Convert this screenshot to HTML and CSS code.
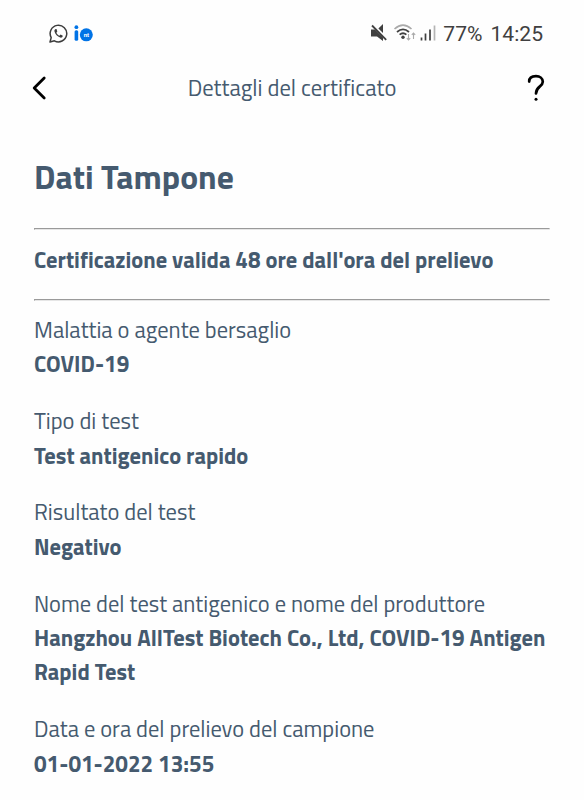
FILE: index.html
```
<!DOCTYPE html>
<html lang="it">

<head>
    <meta charset="UTF-8">
    <meta name="viewport" content="width=device-width, initial-scale=1.0">
    <title>Dettagli del certificato</title>
    <link rel="stylesheet" href="styles.css">
</head>

<body>
    <div class="status-bar">
        <div class="status-apps">
            <svg class="whatsapp" width="19" height="19" viewBox="0 0 19 19">
                <path d="M1 18 L2.2 13.6 A8.3 8.3 0 1 1 5.4 16.8 Z" fill="none" stroke="#3c3c3c" stroke-width="1.5" stroke-linejoin="round" />
                <path d="M6.7 5 C5.6 5.4 5.2 6.3 5.5 7.6 C6.2 10.4 8.4 12.8 11.2 13.6 C12.5 13.9 13.7 13.3 13.8 11.7 L11.6 10.5 L10.4 11.7 C9 11.1 8 10.1 7.4 8.8 L8.3 7.6 L7.5 5.1 Z" fill="#3c3c3c" />
            </svg>
            <svg class="io" width="19" height="17" viewBox="0 0 19 17">
                <circle cx="2.4" cy="2.2" r="1.9" fill="#0073e6" />
                <rect x=".6" y="5.2" width="3.6" height="10.6" rx="1.5" fill="#0073e6" />
                <circle cx="12.3" cy="9.8" r="6.5" fill="#0073e6" />
                <text class="io-text" x="12.4" y="12">nt</text>
            </svg>
        </div>
        <div class="status-info">
            <svg width="66" height="18" viewBox="0 0 66 18">
                <!-- muted -->
                <path d="M0 5.5 H4 L12 13.5 V17 L6 12.5 H0 Z M7.4 4.4 L12 0 V9 Z" fill="#404040" />
                <path d="M1 1.5 L15.2 15.8" stroke="#404040" stroke-width="1.8" />
                <!-- wifi -->
                <path d="M23.5 5 Q32 -2.8 40.5 5" fill="none" stroke="#aaa" stroke-width="1.6" />
                <path d="M26 8 Q32 2.8 38 8 M28.6 10.6 Q32 7.8 35.4 10.6" fill="none" stroke="#404040" stroke-width="1.8" />
                <circle cx="32" cy="13.3" r="1.7" fill="#404040" />
                <path d="M37.5 10 V16 M35.8 14.2 L37.5 16 L39.2 14.2 M42.5 15 V9 M40.8 10.8 L42.5 9 L44.2 10.8" fill="none" stroke="#aaa" stroke-width="1.1" />
                <!-- signal -->
                <path d="M50.5 16.5 V13.5 M54.5 16.5 V9.5 M59 16.5 V5.5" stroke="#404040" stroke-width="1.7" />
                <path d="M63.5 16.5 V1.5" stroke="#b5b5b5" stroke-width="1.7" />
            </svg>
            <span class="battery">77%</span>
            <span class="clock">14:25</span>
        </div>
    </div>

    <header>
        <svg width="16" height="26" viewBox="0 0 16 26">
            <path d="M12.2 3 L2.2 13 L12.2 23" fill="none" stroke="#000" stroke-width="2.8" stroke-linecap="round" stroke-linejoin="round" />
        </svg>
        <div class="header-title">Dettagli del certificato</div>
        <svg width="18" height="28" viewBox="0 0 18 28">
            <path d="M2.2 7.6 C2.2 4 5 2.2 9 2.2 C13 2.2 15.8 4.4 15.8 7.8 C15.8 12.6 9 12.4 9 19.5" fill="none" stroke="#000" stroke-width="2.7" stroke-linecap="round" />
            <circle cx="9" cy="25.3" r="1.5" fill="#000" />
        </svg>
    </header>

    <main>
        <h1>Dati Tampone</h1>
        <hr>
        <div class="validity">Certificazione valida 48 ore dall'ora del prelievo</div>
        <hr>
        <dl>
            <dt>Malattia o agente bersaglio</dt>
            <dd>COVID-19</dd>
            <dt>Tipo di test</dt>
            <dd>Test antigenico rapido</dd>
            <dt>Risultato del test</dt>
            <dd>Negativo</dd>
            <dt>Nome del test antigenico e nome del produttore</dt>
            <dd>Hangzhou AllTest Biotech Co., Ltd, COVID-19 Antigen Rapid Test</dd>
            <dt>Data e ora del prelievo del campione</dt>
            <dd>01-01-2022 13:55</dd>
        </dl>
    </main>
</body>

</html>
```
FILE: styles.css
```
body {
    margin: 0;
    height: 800px;
    overflow: hidden;
    background-color: #fefefe;
    color: #455a6f;
    font-family: 'Titillium Web', Roboto, sans-serif;
}

.status-bar {
    display: flex;
    justify-content: space-between;
    align-items: center;
    height: 66px;
    padding: 0 41px 0 49px;
    color: #404040;
    font-family: Roboto, sans-serif;
    font-size: 21.1px;
}

.status-apps,
.status-info {
    display: flex;
    align-items: center;
}

.io {
    margin-left: 6px;
}

.io-text {
    fill: #fff;
    font-size: 6px;
    font-weight: 700;
    text-anchor: middle;
}

.battery {
    margin: 0 8px 0 6px;
}

header {
    display: flex;
    justify-content: space-between;
    align-items: center;
    height: 44px;
    padding: 0 39px 0 32px;
}

.header-title {
    margin: -1px 0 0 9px;
    font-size: 22.6px;
    font-weight: 400;
}

main {
    padding: 0 34px;
}

h1 {
    margin: 43px 0 27px;
    font-size: 33.7px;
    font-weight: 700;
    line-height: 48px;
}

hr {
    margin: 0;
    border: 1px solid;
    border-color: #9a9a9a #eee #e6e6e6 #9a9a9a;
}

.validity {
    padding: 13px 0 21px;
    line-height: 35px;
    white-space: nowrap;
    font-size: 22.5px;
    font-weight: 700;
}

dl {
    margin: 12px 0 0;
    font-size: 22.5px;
    line-height: 34.4px;
}

dt {
    font-weight: 400;
}

dd {
    margin: 0 0 22.4px;
    font-weight: 700;
}
```
